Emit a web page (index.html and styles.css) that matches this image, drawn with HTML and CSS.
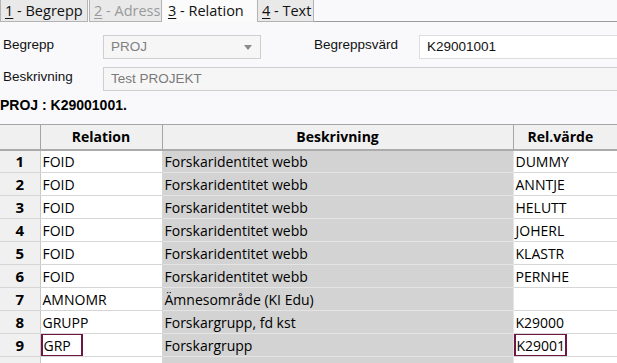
FILE: index.html
```html
<!DOCTYPE html>
<html lang="sv">
<head>
<meta charset="utf-8">
<title>Relation</title>
<link rel="stylesheet" href="styles.css">
</head>
<body>
<div class="tabs">
  <div class="tab t1"><u>1</u> - Begrepp</div>
  <div class="tab t2 disabled"><u>2</u> - Adress</div>
  <div class="tab t3 active"><u>3</u> - Relation</div>
  <div class="tab t4"><u>4</u> - Text</div>
  <div class="tab-fill"></div>
</div>
<div class="form">
  <div class="form-row">
    <div class="label">Begrepp</div>
    <div class="select"><span>PROJ</span><span class="arrow"></span></div>
    <div class="label label-2">Begreppsvärde</div>
    <div class="input value">K29001001</div>
  </div>
  <div class="form-row">
    <div class="label">Beskrivning</div>
    <div class="input wide">Test PROJEKT</div>
  </div>
</div>
<div class="title">PROJ : K29001001.</div>
<table class="grid">
  <colgroup>
    <col class="c-num"><col class="c-rel"><col class="c-desc"><col class="c-val">
  </colgroup>
  <thead>
    <tr><th></th><th>Relation</th><th>Beskrivning</th><th>Rel.värde</th></tr>
  </thead>
  <tbody>
    <tr><td class="num">1</td><td>FOID</td><td class="desc">Forskaridentitet webb</td><td>DUMMY</td></tr>
    <tr><td class="num">2</td><td>FOID</td><td class="desc">Forskaridentitet webb</td><td>ANNTJE</td></tr>
    <tr><td class="num">3</td><td>FOID</td><td class="desc">Forskaridentitet webb</td><td>HELUTT</td></tr>
    <tr><td class="num">4</td><td>FOID</td><td class="desc">Forskaridentitet webb</td><td>JOHERL</td></tr>
    <tr><td class="num">5</td><td>FOID</td><td class="desc">Forskaridentitet webb</td><td>KLASTR</td></tr>
    <tr><td class="num">6</td><td>FOID</td><td class="desc">Forskaridentitet webb</td><td>PERNHE</td></tr>
    <tr><td class="num">7</td><td>AMNOMR</td><td class="desc">Ämnesområde (KI Edu)</td><td></td></tr>
    <tr><td class="num">8</td><td>GRUPP</td><td class="desc">Forskargrupp, fd kst</td><td>K29000</td></tr>
    <tr><td class="num">9</td><td><span class="edit">GRP</span></td><td class="desc">Forskargrupp</td><td><span class="edit">K29001</span></td></tr>
    <tr><td class="num"></td><td></td><td class="desc"></td><td></td></tr>
  </tbody>
</table>
</body>
</html>
```
FILE: styles.css
```css
html, body {
  margin: 0;
  padding: 0;
}
body {
  width: 617px;
  height: 363px;
  overflow: hidden;
  background: #f9f9fb;
  font-family: "Liberation Sans", Arial, sans-serif;
  color: #000;
}

/* Tabs */
.tabs {
  display: flex;
  height: 22px;
}
.tab {
  box-sizing: border-box;
  height: 22px;
  padding: 0 0 0 4px;
  font-family: "Open Sans", "Noto Sans", sans-serif;
  font-size: 14.5px;
  line-height: 21px;
  background: #e9e9ea;
  border: 1px solid #b4b4b4;
  border-top: none;
  color: #111;
  white-space: nowrap;
  overflow: hidden;
}
.tab + .tab { margin-left: 1px; }
.t1 { width: 88px; }
.t2 { width: 73px; }
.t3 { width: 93px; }
.t4 { width: 57px; }
.tab u { text-decoration: underline; text-underline-offset: 2px; }
.tab.disabled { color: #9a9a9a; }
.tab.active {
  background: #fbfbfc;
  border-color: transparent;
  border-bottom: none;
}
.tab-fill {
  flex: 1;
  border-bottom: 1px solid #9a9a9a;
}

/* Form */
.form {
  padding-top: 13px;
}
.form-row {
  display: flex;
  align-items: center;
  height: 23px;
  margin-bottom: 9px;
  font-size: 13.5px;
}
.label {
  width: 100px;
  padding-left: 3px;
  color: #111;
  margin-top: -4px;
}
.label-2 {
  width: 84px;
  overflow: hidden;
  white-space: nowrap;
  margin-left: 53px;
  margin-right: 21px;
  padding-left: 0;
}
.select {
  box-sizing: border-box;
  width: 158px;
  height: 24px;
  border: 1px solid #cfcfcf;
  background: #f6f6f7;
  color: #808080;
  display: flex;
  align-items: center;
  justify-content: space-between;
  padding: 0 8px 0 7px;
}
.arrow {
  width: 0;
  height: 0;
  border-left: 4.5px solid transparent;
  border-right: 4.5px solid transparent;
  border-top: 5px solid #8a8a8a;
  margin-top: 2px;
}
.input {
  box-sizing: border-box;
  height: 24px;
  border: 1px solid #cfcfcf;
  display: flex;
  align-items: center;
  padding-left: 7px;
}
.input.value {
  flex: 1;
  background: #fff;
  border-color: #dddddd;
  border-right: none;
  color: #111;
}
.input.wide {
  flex: 1;
  background: #f6f6f7;
  color: #7a7a7a;
  border-right: none;
}

/* Title */
.title {
  font-weight: bold;
  font-size: 14px;
  line-height: 16px;
  margin-top: -2px;
  height: 27px;
}

/* Grid */
.grid {
  border-collapse: collapse;
  table-layout: fixed;
  width: 640px;
  font-family: "Open Sans", "Noto Sans", sans-serif;
  font-size: 14px;
}
.c-num { width: 40px; }
.c-rel { width: 122px; }
.c-desc { width: 351px; }
.c-val { width: 127px; }
.grid th {
  height: 25px;
  box-sizing: border-box;
  background: #f0f0f0;
  border: 1px solid #a5a5a5;
  border-bottom: 2px solid #ababab;
  font-weight: bold;
  padding: 0;
  text-align: center;
}
.grid th:first-child { border-left: none; }
.grid th:last-child { text-align: left; padding-left: 14px; }
.grid td {
  height: 23px;
  box-sizing: border-box;
  padding: 0 0 0 2px;
  border: 1px solid #d6d6d6;
  background: #fff;
  white-space: nowrap;
  overflow: hidden;
  position: relative;
}
.grid td.num {
  background: #f0f0f0;
  font-weight: bold;
  font-size: 15px;
  text-align: center;
  padding: 0;
  border-left: none;
  border-right-color: #c8c8c8;
}
.grid td.desc {
  background: #d3d3d3;
  border-color: #e4e4e4;
}
.edit {
  position: absolute;
  left: 0;
  top: -1px;
  bottom: -1px;
  box-sizing: border-box;
  border: 2px solid #6c1744;
  padding: 0 0 0 1px;
  display: flex;
  align-items: center;
  background: #fff;
  width: 42px;
}
td:last-child .edit { width: 53px; }
```
